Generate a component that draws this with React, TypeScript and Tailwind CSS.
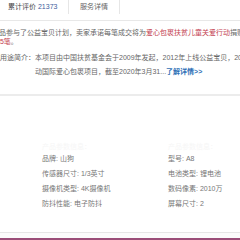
const specs = [
  ["品牌", "山狗", "型号", "A8"],
  ["传感器尺寸", "1/3英寸", "电池类型", "锂电池"],
  ["摄像机类型", "4K摄像机", "数码像素", "2010万"],
  ["防抖性能", "电子防抖", "屏幕尺寸", "2"],
];

const App = () => {
  return (
    <div
      className="relative w-[240px] h-[240px] overflow-hidden bg-white text-[7px] text-[#666]"
      style={{ fontFamily: '"Liberation Sans", "Noto Sans CJK SC", sans-serif' }}
    >
      {/* tabs */}
      <div className="flex h-[21px] border-b border-[#e8e8e8]">
        <div className="flex items-center w-[69px] h-[14px] pl-[8px] border-r border-[#e6e6e6] text-[#444] whitespace-nowrap">
          累计评价&nbsp;<span className="text-[#3d5d9c]">21373</span>
        </div>
        <div className="flex items-center justify-center w-[51px] h-[14px] border-r border-[#e6e6e6] whitespace-nowrap">
          服务详情
        </div>
      </div>

      {/* 公益宝贝 */}
      <div className="mt-[7px] whitespace-nowrap">
        <div className="h-[9px] leading-[9px] -ml-[15px]">
          此商品参与了公益宝贝计划，卖家承诺每笔成交将为
          <span className="text-[#c3404f]">爱心包裹扶贫儿童关爱行动</span>
          捐赠0.02元，该商品已累计捐赠
        </div>
        <div className="h-[9px] leading-[9px] -ml-[4px] text-[#c3404f]">
          25笔<span className="text-[#666]">。</span>
        </div>
        <div className="flex mt-[5px] -ml-[14px] leading-[14px]">
          <div className="w-[49px] shrink-0">公益用途简介：</div>
          <div>
            <div>本项目由中国扶贫基金会于2009年发起，2012年上线公益宝贝，2018年升级为</div>
            <div>
              动国际爱心包裹项目，截至2020年3月31...
              <span className="font-bold text-[#2f6fb6]">了解详情&gt;&gt;</span>
            </div>
          </div>
        </div>
      </div>

      <div className="mt-[15px] h-[2px] bg-[#ececec]" />

      {/* 参数 */}
      <div className="mt-[47px] grid grid-cols-[126px_1fr] pl-[42px] leading-[15px] whitespace-nowrap text-[#777]">
        <div className="h-[8px] leading-[8px] text-[#f6f6f6]">产品参数信息：</div>
        <div className="h-[8px] leading-[8px] text-[#f6f6f6]">产品参数信息：</div>
        {specs.map(([k1, v1, k2, v2]) => (
          <div key={k1} className="contents">
            <div>
              {k1}: {v1}
            </div>
            <div>
              {k2}: {v2}
            </div>
          </div>
        ))}
      </div>

      <div className="absolute left-0 right-0 bottom-0">
        <div className="h-px bg-[#e6e6e6]" />
        <div className="h-[5px] bg-[#fbfbfb]" />
        <div className="h-[2px] bg-[#9b4d78]" />
      </div>
    </div>
  );
};

export default App;
